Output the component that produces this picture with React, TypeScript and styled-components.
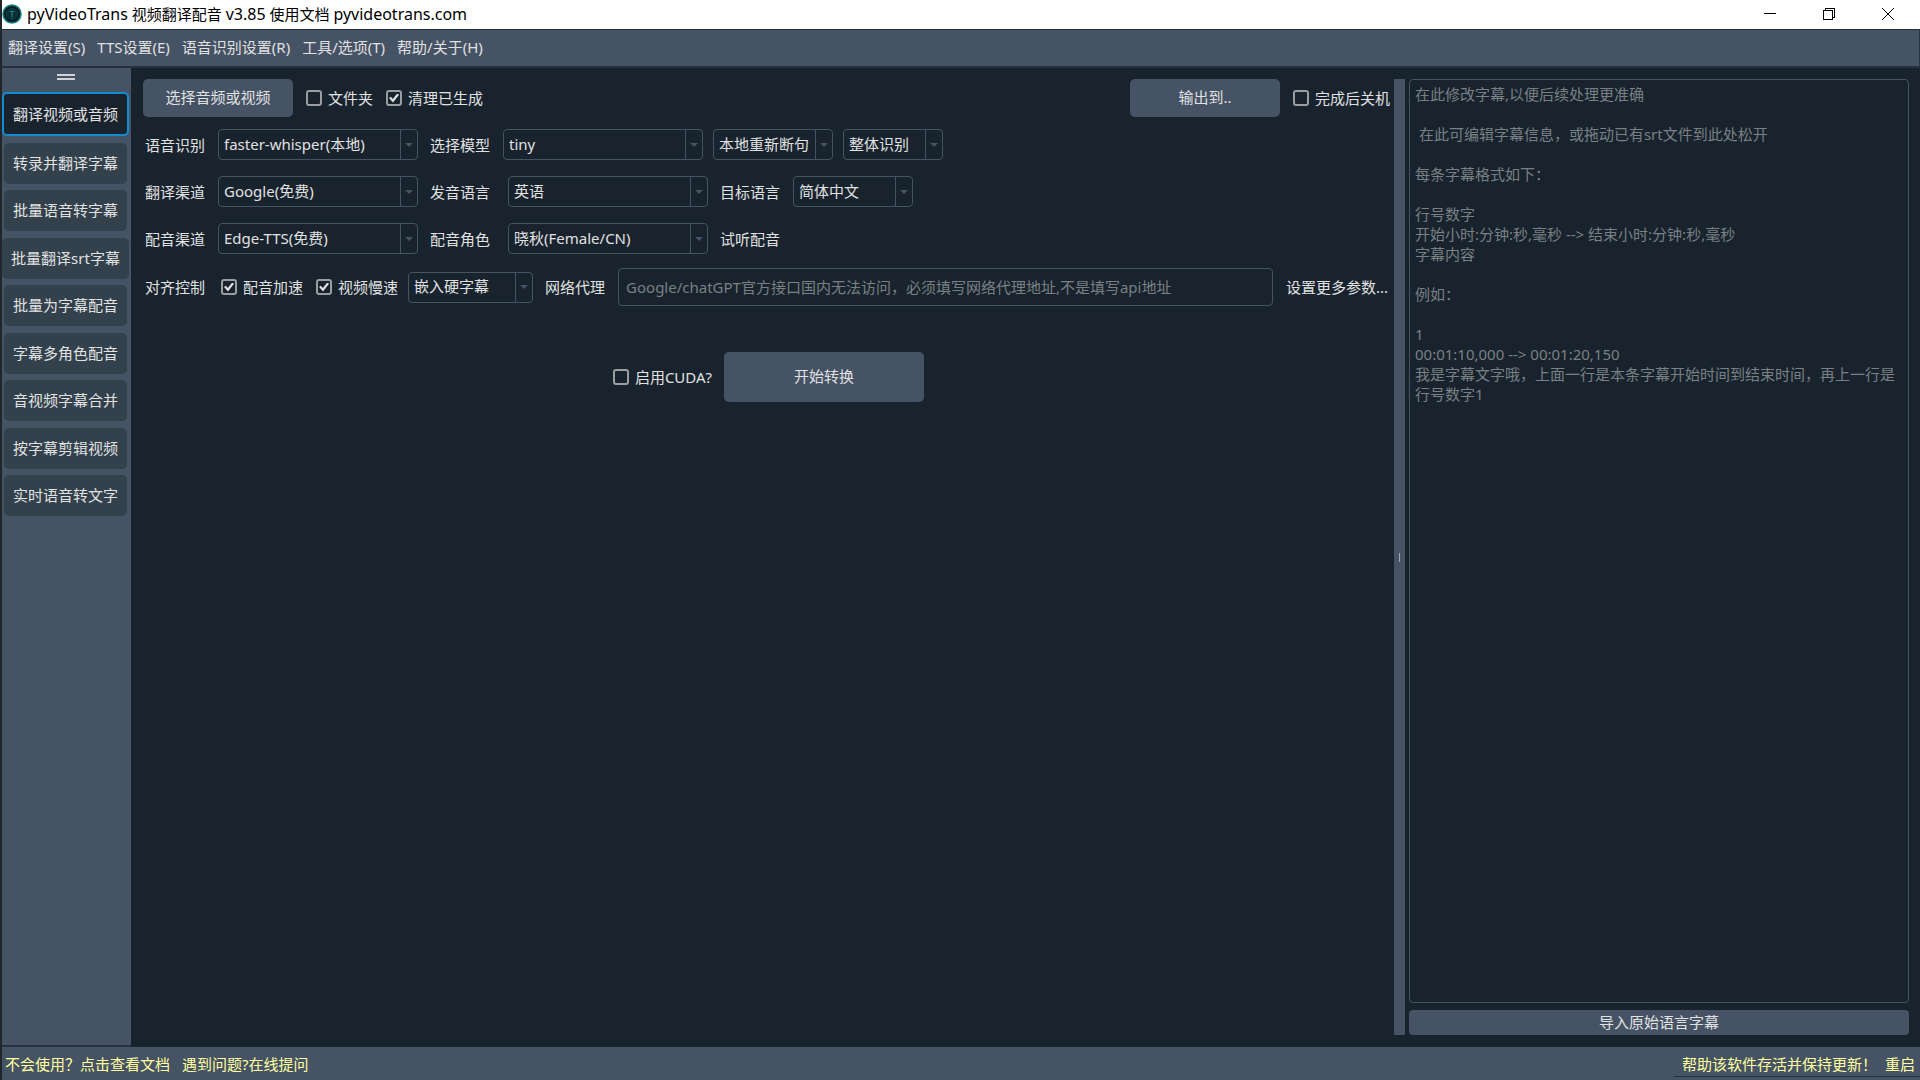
import React from "react";
import styled, { createGlobalStyle } from "styled-components";

const c = {
  bg: "#19232d",
  bar: "#455364",
  item: "#32414b",
  text: "#e0e1e3",
  dim: "#788085",
  accent: "#148cd2",
  link: "#ffffa0",
  edge: "#26323f",
};

const GlobalStyle = createGlobalStyle`
  *, *::before, *::after { box-sizing: border-box; }
  body { margin: 0; background: ${c.bg}; }
  body, button, input, select, textarea {
    font-family: "Noto Sans", "Noto Sans CJK SC", sans-serif;
    font-size: 15px;
    line-height: 20px;
  }
  button { border: 0; padding: 0; background: none; color: inherit; white-space: nowrap; cursor: pointer; }
`;

const Window = styled.div`
  display: flex;
  flex-direction: column;
  min-height: 100vh;
  border-left: 2px solid #22262a;
  background: ${c.bg};
  color: ${c.text};
`;

const TitleBar = styled.header`
  display: flex;
  align-items: center;
  height: 29px;
  padding: 0 3px 1px 0;
  background: #fff;
  color: #000;
`;

const Title = styled.h1`
  flex: 1;
  margin: 0 0 0 5px;
  font-size: 15px;
  font-weight: 400;
`;

const Latin = styled.span`
  font-size: 16px;
`;

const WindowButton = styled.button`
  display: grid;
  place-items: center;
  width: 59px;
  height: 28px;
`;

const MenuBar = styled.nav`
  display: flex;
  gap: 12px;
  align-items: center;
  height: 39px;
  padding: 0 6px 2px;
  border: solid ${c.edge};
  border-width: 1px 1px 2px 0;
  background: ${c.bar};
`;

const Body = styled.div`
  flex: 1;
  display: flex;
`;

const SideBar = styled.aside`
  display: flex;
  flex-direction: column;
  align-items: center;
  gap: 6px;
  width: 129px;
  padding-top: 6px;
  padding-right: 2px;
  border-bottom: 2px solid ${c.edge};
  background: ${c.bar};
`;

const Grip = styled.div`
  width: 18px;
  height: 6px;
  margin-bottom: 6px;
  border: solid #d0d3d6;
  border-width: 2px 0;
`;

const SideButton = styled.button<{ $active?: boolean }>`
  height: ${(p) => (p.$active ? 44 : 41)}px;
  padding: 0 9px 1px;
  border: ${(p) => (p.$active ? `2px solid ${c.accent}` : 0)};
  border-radius: 5px;
  background: ${(p) => (p.$active ? c.bg : c.item)};

  &:nth-of-type(even) {
    margin-top: 1px;
  }
`;

const Main = styled.main`
  flex: 1;
  display: flex;
  flex-direction: column;
  min-width: 0;
  padding: 11px 4px 0 12px;
`;

const Row = styled.div<{ $indent?: boolean }>`
  display: flex;
  align-items: center;
  padding-left: ${(p) => (p.$indent ? 2 : 0)}px;
`;

const FieldRows = styled.div`
  display: flex;
  flex-direction: column;
  gap: 16px;
  padding: 12px 0 14px;
`;

const StartRow = styled.div`
  display: flex;
  align-items: center;
  justify-content: center;
  gap: 12px;
  padding: 46px 0 0 4px;
`;

const Spacer = styled.div`
  flex: 1;
`;

const SolidButton = styled.button<{ $width: number; $height: number }>`
  width: ${(p) => p.$width}px;
  height: ${(p) => p.$height}px;
  padding-bottom: 2px;
  border-radius: 5px;
  background: ${c.bar};
`;

const FieldLabel = styled.label<{ $gap?: number }>`
  margin-right: ${(p) => p.$gap ?? 13}px;
  white-space: nowrap;
`;

const Flat = styled.button``;

const MoreButton = styled.button`
  margin-right: 2px;
`;

const Combo = styled.div<{ $width: number; $gap?: number }>`
  display: flex;
  width: ${(p) => p.$width}px;
  height: 31px;
  margin-right: ${(p) => p.$gap ?? 12}px;
  border: 1px solid ${c.bar};
  border-radius: 4px;
`;

const Select = styled.select`
  flex: 1;
  min-width: 0;
  padding: 0 5px 2px;
  border: 0;
  appearance: none;
  background: none;
  color: ${c.text};
`;

const Arrow = styled.span`
  display: grid;
  place-items: center;
  width: 17px;
  border-left: 1px solid ${c.bar};
  pointer-events: none;

  &::before {
    content: "";
    border: solid transparent;
    border-width: 4px 4px 0;
    border-top-color: ${c.bar};
  }
`;

const CheckGroup = styled.div`
  display: flex;
  margin-left: 13px;
`;

const CheckLabel = styled.label<{ $gap?: number }>`
  display: flex;
  align-items: center;
  gap: 6px;
  margin-right: ${(p) => p.$gap ?? 0}px;
  white-space: nowrap;
`;

const Box = styled.input`
  display: grid;
  place-items: center;
  width: 16px;
  height: 16px;
  margin: 0;
  border: 2px solid #9a9da1;
  border-radius: 3px;
  appearance: none;

  &:checked::before {
    content: "";
    width: 10px;
    height: 9px;
    background: ${c.text};
    clip-path: polygon(0 50%, 18% 36%, 38% 62%, 82% 0, 100% 14%, 40% 100%);
  }
`;

const ProxyInput = styled.input`
  flex: 1;
  min-width: 0;
  height: 38px;
  margin-right: 13px;
  padding: 0 7px;
  border: 1px solid ${c.bar};
  border-radius: 4px;
  background: none;
  color: ${c.text};

  &::placeholder {
    color: ${c.dim};
  }
`;

const Splitter = styled.div`
  display: grid;
  place-items: center;
  width: 11px;
  margin: 11px 4px 12px 0;
  background: ${c.bar};

  &::before {
    content: "";
    width: 1px;
    height: 9px;
    background: #9da9b5;
  }
`;

const SubtitlePanel = styled.section`
  display: flex;
  flex-direction: column;
  gap: 7px;
  width: 511px;
  padding: 11px 11px 12px 0;
`;

const SubtitleArea = styled.textarea`
  flex: 1;
  padding: 4px 5px;
  border: 1px solid ${c.bar};
  border-radius: 4px;
  background: none;
  color: ${c.text};
  resize: none;

  &::placeholder {
    color: ${c.dim};
  }
`;

const ImportButton = styled.button`
  height: 25px;
  padding-bottom: 1px;
  border-radius: 4px;
  background: ${c.bar};
`;

const StatusBar = styled.footer`
  display: flex;
  align-items: center;
  justify-content: space-between;
  height: 33px;
  padding-left: 3px;
  background: ${c.bar};
  color: ${c.link};
`;

const StatusLinks = styled.div`
  display: flex;
  gap: 12px;
`;

const SupportLinks = styled.div`
  display: flex;
  gap: 8px;
  align-self: stretch;
  margin-bottom: 3px;
  padding: 4px 5px 0 8px;
  border-bottom: 1px solid ${c.edge};
`;

const menus = ["翻译设置(S)", "TTS设置(E)", "语音识别设置(R)", "工具/选项(T)", "帮助/关于(H)"];

const tasks = [
  "翻译视频或音频",
  "转录并翻译字幕",
  "批量语音转字幕",
  "批量翻译srt字幕",
  "批量为字幕配音",
  "字幕多角色配音",
  "音视频字幕合并",
  "按字幕剪辑视频",
  "实时语音转文字",
];

const subtitleHint = `在此修改字幕,以便后续处理更准确

 在此可编辑字幕信息，或拖动已有srt文件到此处松开

每条字幕格式如下：

行号数字
开始小时:分钟:秒,毫秒 --> 结束小时:分钟:秒,毫秒
字幕内容

例如：

1
00:01:10,000 --> 00:01:20,150
我是字幕文字哦，上面一行是本条字幕开始时间到结束时间，再上一行是行号数字1`;

type DropProps = { id: string; value: string; width: number; gap?: number; label?: string };

function Drop({ id, value, width, gap, label }: DropProps) {
  return (
    <Combo $width={width} $gap={gap}>
      <Select id={id} aria-label={label}>
        <option>{value}</option>
      </Select>
      <Arrow />
    </Combo>
  );
}

function Check({ text, checked, gap }: { text: string; checked?: boolean; gap?: number }) {
  return (
    <CheckLabel $gap={gap}>
      <Box type="checkbox" defaultChecked={checked} />
      {text}
    </CheckLabel>
  );
}

function Logo() {
  return (
    <svg width="20" height="20" viewBox="0 0 20 20">
      <circle cx="10" cy="10" r="9.8" fill="#1b8c8f" />
      <circle cx="10" cy="10" r="8.6" fill="#0b3a40" />
      <circle cx="10" cy="10" r="7.6" fill="#04181d" />
      <circle cx="10" cy="10" r="5.5" fill="#0a2f35" stroke="#0e464b" />
      <path d="M7.5 7.5h5M10 7.5v6" stroke="#2b7d82" strokeWidth="1.2" fill="none" />
    </svg>
  );
}

export default function App() {
  return (
    <>
      <GlobalStyle />
      <Window>
        <TitleBar>
          <Logo />
          <Title>
            <Latin>pyVideoTrans</Latin> 视频翻译配音 <Latin>v3.85</Latin> 使用文档{" "}
            <Latin>pyvideotrans.com</Latin>
          </Title>
          <WindowButton aria-label="最小化">
            <svg width="12" height="12" shapeRendering="crispEdges">
              <path d="M0 5.5h12" stroke="#000" />
            </svg>
          </WindowButton>
          <WindowButton aria-label="还原">
            <svg width="12" height="12" fill="none" stroke="#000" shapeRendering="crispEdges">
              <path d="M.5 2.5h9v9h-9zM2.5 2.5v-2h9v9h-2" />
            </svg>
          </WindowButton>
          <WindowButton aria-label="关闭">
            <svg width="12" height="12" stroke="#000">
              <path d="M0 0l12 12M12 0L0 12" />
            </svg>
          </WindowButton>
        </TitleBar>

        <MenuBar>
          {menus.map((m) => (
            <Flat key={m}>{m}</Flat>
          ))}
        </MenuBar>

        <Body>
          <SideBar>
            <Grip />
            {tasks.map((t, i) => (
              <SideButton key={t} $active={i === 0}>
                {t}
              </SideButton>
            ))}
          </SideBar>

          <Main>
            <Row>
              <SolidButton $width={150} $height={38}>选择音频或视频</SolidButton>
              <CheckGroup>
                <Check text="文件夹" gap={13} />
                <Check text="清理已生成" checked />
              </CheckGroup>
              <Spacer />
              <SolidButton $width={150} $height={38}>输出到..</SolidButton>
              <CheckGroup>
                <Check text="完成后关机" />
              </CheckGroup>
            </Row>

            <FieldRows>
              <Row $indent>
                <FieldLabel htmlFor="recogn">语音识别</FieldLabel>
                <Drop id="recogn" value="faster-whisper(本地)" width={200} />
                <FieldLabel htmlFor="model">选择模型</FieldLabel>
                <Drop id="model" value="tiny" width={200} gap={10} />
                <Drop id="split" label="断句方式" value="本地重新断句" width={120} gap={10} />
                <Drop id="mode" label="识别方式" value="整体识别" width={100} />
              </Row>
              <Row $indent>
                <FieldLabel htmlFor="translator">翻译渠道</FieldLabel>
                <Drop id="translator" value="Google(免费)" width={200} />
                <FieldLabel htmlFor="source" $gap={18}>发音语言</FieldLabel>
                <Drop id="source" value="英语" width={200} />
                <FieldLabel htmlFor="target">目标语言</FieldLabel>
                <Drop id="target" value="简体中文" width={120} />
              </Row>
              <Row $indent>
                <FieldLabel htmlFor="tts">配音渠道</FieldLabel>
                <Drop id="tts" value="Edge-TTS(免费)" width={200} />
                <FieldLabel htmlFor="role" $gap={18}>配音角色</FieldLabel>
                <Drop id="role" value="晓秋(Female/CN)" width={200} />
                <Flat>试听配音</Flat>
              </Row>
            </FieldRows>

            <Row $indent>
              <FieldLabel as="span" $gap={16}>对齐控制</FieldLabel>
              <Check text="配音加速" checked gap={13} />
              <Check text="视频慢速" checked gap={10} />
              <Drop id="embed" label="字幕嵌入方式" value="嵌入硬字幕" width={125} />
              <FieldLabel htmlFor="proxy">网络代理</FieldLabel>
              <ProxyInput
                id="proxy"
                placeholder="Google/chatGPT官方接口国内无法访问，必须填写网络代理地址,不是填写api地址"
              />
              <MoreButton>设置更多参数...</MoreButton>
            </Row>

            <StartRow>
              <Check text="启用CUDA?" />
              <SolidButton $width={200} $height={50}>开始转换</SolidButton>
            </StartRow>
          </Main>

          <Splitter />

          <SubtitlePanel>
            <SubtitleArea aria-label="字幕" placeholder={subtitleHint} />
            <ImportButton>导入原始语言字幕</ImportButton>
          </SubtitlePanel>
        </Body>

        <StatusBar>
          <StatusLinks>
            <Flat>不会使用？点击查看文档</Flat>
            <Flat>遇到问题?在线提问</Flat>
          </StatusLinks>
          <SupportLinks>
            <Flat>帮助该软件存活并保持更新！</Flat>
            <Flat>重启</Flat>
          </SupportLinks>
        </StatusBar>
      </Window>
    </>
  );
}
